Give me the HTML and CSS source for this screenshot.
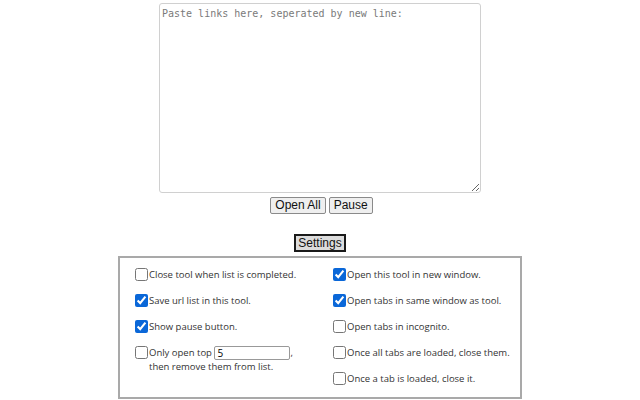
FILE: index.html
```html
<!DOCTYPE html>
<html>
<head>
<meta charset="utf-8">
<link rel="stylesheet" href="styles.css">
</head>
<body>
<div class="page">
  <textarea class="links" placeholder="Paste links here, seperated by new line:"></textarea>
  <div class="actions">
    <button class="btn">Open All</button>
    <button class="btn">Pause</button>
  </div>
  <button class="settings-btn">Settings</button>
  <div class="settings">
    <div class="col">
      <label class="opt"><input type="checkbox"><span>Close tool when list is completed.</span></label>
      <label class="opt"><input type="checkbox" checked><span>Save url list in this tool.</span></label>
      <label class="opt"><input type="checkbox" checked><span>Show pause button.</span></label>
      <label class="opt"><input type="checkbox"><span>Only open top <input type="text" class="num" value="5">,<br>then remove them from list.</span></label>
    </div>
    <div class="col">
      <label class="opt"><input type="checkbox" checked><span>Open this tool in new window.</span></label>
      <label class="opt"><input type="checkbox" checked><span>Open tabs in same window as tool.</span></label>
      <label class="opt"><input type="checkbox"><span>Open tabs in incognito.</span></label>
      <label class="opt"><input type="checkbox"><span>Once all tabs are loaded, close them.</span></label>
      <label class="opt"><input type="checkbox"><span>Once a tab is loaded, close it.</span></label>
    </div>
  </div>
</div>
</body>
</html>
```
FILE: styles.css
```css
html, body {
  margin: 0;
  padding: 0;
  background: #fff;
}
.page {
  display: flex;
  flex-direction: column;
  align-items: center;
  padding-top: 3px;
}
.links {
  box-sizing: border-box;
  width: 322px;
  height: 190px;
  margin: 0;
  padding: 4px 2px;
  border: 1px solid #d0d0d0;
  border-radius: 3px;
  font-family: "DejaVu Sans Mono", monospace;
  font-size: 10px;
  color: #333;
  resize: both;
}
.links::placeholder {
  color: #7a7a7a;
}
.actions {
  display: flex;
  gap: 3px;
  margin-top: 4px;
  padding-left: 3px;
}
.btn {
  box-sizing: border-box;
  height: 17px;
  margin: 0;
  padding: 0 4px;
  font-family: "Liberation Sans", Arial, sans-serif;
  font-size: 12px;
  color: #111;
  background: #efefef;
  border: 1px solid #8a8a8a;
  border-radius: 2px;
  line-height: 15px;
}
.settings-btn {
  box-sizing: border-box;
  height: 18px;
  margin: 20px 0 0;
  padding: 0 2px;
  font-family: "Liberation Sans", Arial, sans-serif;
  font-size: 12px;
  color: #111;
  background: #dcdcdc;
  border: 2px solid #1a1a1a;
  line-height: 14px;
}
.settings {
  box-sizing: border-box;
  width: 404px;
  height: 143px;
  margin-top: 4px;
  border: 2px solid #a9a9a9;
  display: grid;
  grid-template-columns: 198px 1fr;
  padding: 10px 0 0 15px;
}
.col {
  display: flex;
  flex-direction: column;
  gap: 12px;
}
.opt {
  display: flex;
  align-items: flex-start;
  font-family: "Open Sans", sans-serif;
  font-size: 9.5px;
  line-height: 14px;
  color: #333;
  white-space: nowrap;
}
.opt input[type=checkbox] {
  width: 13px;
  height: 13px;
  margin: 0 1px 0 0;
  accent-color: #0a67d8;
}
.num {
  box-sizing: border-box;
  width: 76px;
  height: 14px;
  margin: 0;
  padding: 0 2px;
  font-family: "Open Sans", sans-serif;
  font-size: 10px;
  border: 1px solid #999;
  border-radius: 2px;
  vertical-align: top;
}
```
